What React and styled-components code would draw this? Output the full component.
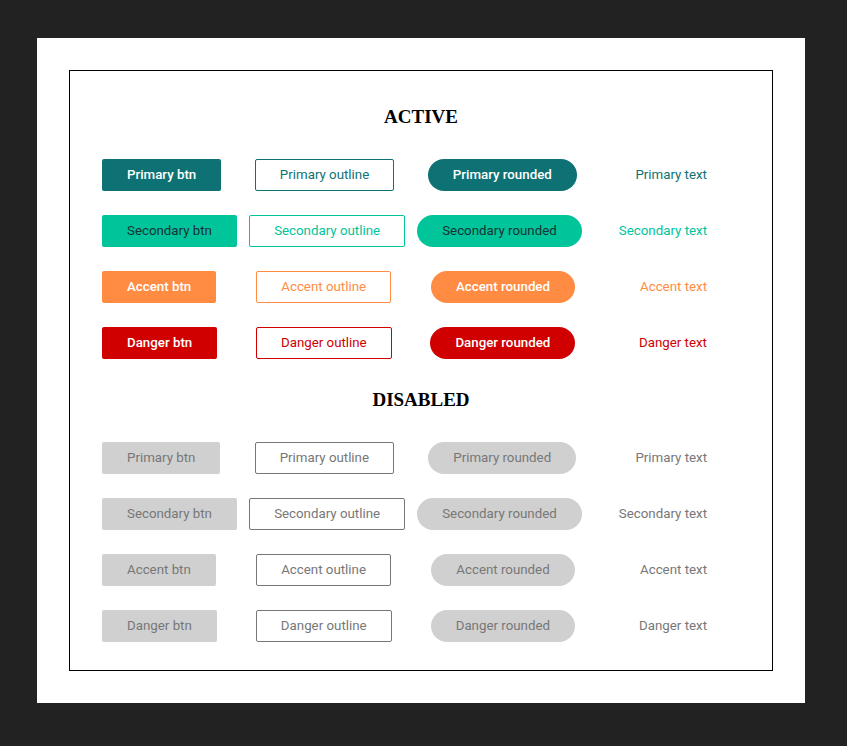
import React from 'react'
import styled, { createGlobalStyle, css } from 'styled-components'

const colors = {
    primary: '#0e7275',
    secondary: '#00c49a',
    accent: '#ff8c42',
    danger: '#d00000',
    disabledBg: '#d0d0d0',
    disabledText: '#777777',
}

const GlobalStyle = createGlobalStyle`
    body {
        margin: 0;
        background-color: #222222;
    }
`

const Page = styled.div`
    padding: 38px 42px 43px 37px;
`

const Panel = styled.div`
    background-color: #ffffff;
    padding: 32px;
`

const Frame = styled.div`
    border: 1px solid #000000;
    padding: 35px 32px 28px;
`

const Heading = styled.h2`
    margin: ${(p) => (p.$first ? '0' : '30px')} 0 31px;
    font-family: "Liberation Serif", "Times New Roman", serif;
    font-size: 19px;
    line-height: 22px;
    font-weight: 700;
    text-align: center;
    color: #000000;
`

const Rows = styled.div`
    display: flex;
    flex-direction: column;
    gap: 24px;
    padding-right: 8px;
`

const Row = styled.div`
    display: flex;
    justify-content: space-between;
    align-items: center;
`

const filled = (p) => css`
    background-color: ${colors[p.$color]};
    color: ${p.$color === 'secondary' ? '#1b3136' : '#ffffff'};
    font-weight: ${p.$color === 'secondary' ? 400 : 500};
`

const Button = styled.button`
    height: 32px;
    padding: 0 24px;
    border: 1px solid transparent;
    font-family: Roboto, "Liberation Sans", sans-serif;
    font-size: 13.3px;
    font-weight: 400;
    line-height: 30px;
    white-space: nowrap;
    border-radius: 2px;
    cursor: pointer;

    ${(p) => p.$variant === 'solid' && filled(p)}
    ${(p) => p.$variant === 'rounded' && css`
        ${filled(p)}
        border-radius: 16px;
    `}
    ${(p) => p.$variant === 'outline' && css`
        background-color: #ffffff;
        border-color: ${colors[p.$color]};
        color: ${colors[p.$color]};
    `}
    ${(p) => p.$variant === 'text' && css`
        background-color: transparent;
        color: ${colors[p.$color]};
    `}

    &:disabled {
        cursor: default;
        font-weight: 400;
        color: ${colors.disabledText};
        ${(p) => (p.$variant === 'solid' || p.$variant === 'rounded') && css`
            background-color: ${colors.disabledBg};
        `}
        ${(p) => p.$variant === 'outline' && css`
            border-color: ${colors.disabledText};
        `}
    }
`

const kinds = [
    { key: 'primary', label: 'Primary' },
    { key: 'secondary', label: 'Secondary' },
    { key: 'accent', label: 'Accent' },
    { key: 'danger', label: 'Danger' },
]

const ButtonSet = ({ disabled }) => (
    <Rows>
        {kinds.map((k) => (
            <Row key={k.key}>
                <Button $variant="solid" $color={k.key} disabled={disabled}>{k.label} btn</Button>
                <Button $variant="outline" $color={k.key} disabled={disabled}>{k.label} outline</Button>
                <Button $variant="rounded" $color={k.key} disabled={disabled}>{k.label} rounded</Button>
                <Button $variant="text" $color={k.key} disabled={disabled}>{k.label} text</Button>
            </Row>
        ))}
    </Rows>
)

export default function App() {
    return (
        <Page>
            <GlobalStyle />
            <Panel>
                <Frame>
                    <Heading $first>ACTIVE</Heading>
                    <ButtonSet />
                    <Heading>DISABLED</Heading>
                    <ButtonSet disabled />
                </Frame>
            </Panel>
        </Page>
    )
}
